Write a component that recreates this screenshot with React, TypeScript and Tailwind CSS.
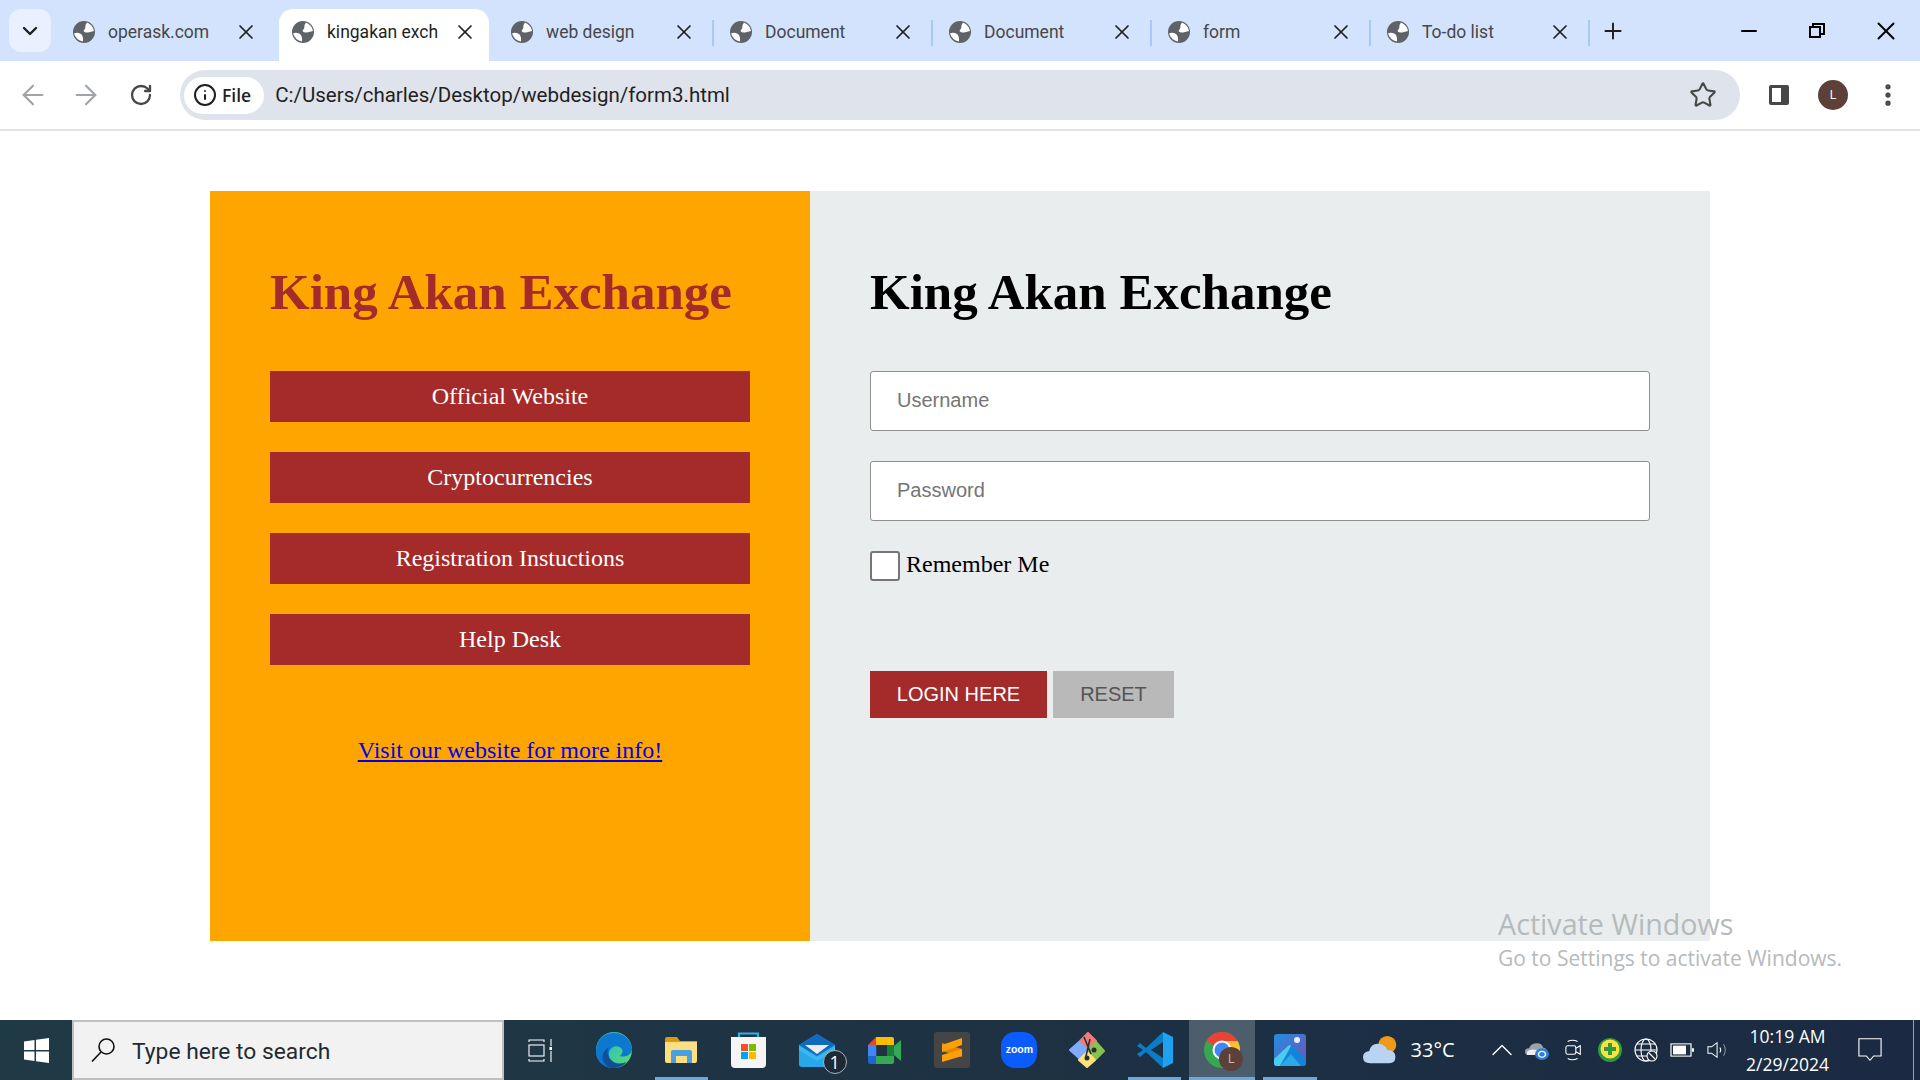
import { ArrowLeft, ArrowRight, ChevronDown, ChevronUp, EllipsisVertical, Info, Minus, Plus, RotateCw, Star, X } from "lucide-react";

const tabs = [
  { title: "operask.com" },
  { title: "kingakan exchange", active: true },
  { title: "web design" },
  { title: "Document", sep: true },
  { title: "Document", sep: true },
  { title: "form", sep: true },
  { title: "To-do list", sep: true },
];

const menuLinks = ["Official Website", "Cryptocurrencies", "Registration Instuctions", "Help Desk"];

function Favicon() {
  return (
    <svg width="22" height="22" viewBox="0 0 22 22" className="shrink-0">
      <circle cx="11" cy="11" r="11" fill="#5f6368" />
      <path d="M14 1.5 Q20 4 21 10 L15 11.5 Q12 12 10.5 10 Q13 7.5 12.5 4 Z" fill="#fff" />
      <path d="M1 12.5 Q4 11 8 13 Q10.5 15 10 20.5 Q3 19 1 12.5 Z" fill="#fff" />
    </svg>
  );
}

function Tab({ title, active, sep }: { title: string; active?: boolean; sep?: boolean }) {
  return (
    <div className="relative flex h-[52px] w-[219px] shrink-0 items-center">
      {sep && <div className="absolute -left-[6px] top-[11px] h-[26px] w-[2px] bg-[#a8c7fa]" />}
      {active && <div className="absolute -left-[1px] right-[10px] top-0 bottom-0 rounded-t-[14px] bg-white" />}
      <div className="relative flex w-full items-center pl-[12px] pr-[22px] pb-[7px]">
        <Favicon />
        <div className={`ml-[13px] w-[111px] overflow-hidden whitespace-nowrap pt-[2px] font-['Roboto',sans-serif] text-[17.5px] ${active ? "text-[#1f1f1f]" : "text-[#474747]"}`}>{active ? "kingakan exch" : title}</div>
        <X size={24} strokeWidth={1.7} className="ml-auto shrink-0 text-[#1f1f1f]" />
      </div>
    </div>
  );
}

function Edge() {
  return (
    <svg width="36" height="36" viewBox="0 0 36 36">
      <defs>
        <linearGradient id="edgeA" x1="0" y1="0" x2="1" y2="1">
          <stop offset="0" stopColor="#1fb5d8" />
          <stop offset="1" stopColor="#5cdc6b" />
        </linearGradient>
      </defs>
      <circle cx="18" cy="18" r="18" fill="url(#edgeA)" />
      <path d="M18 1 C6 1 0 10 0 20 C0 30 9 36 16 36 C22 36 27 34 30 30 C22 34 12 30 13 21 C14 14 22 12 26 17 C28 20 24 24 24 24 C30 26 36 22 36 17 C35 8 28 1 18 1 Z" fill="#0c78d0" />
      <path d="M16 36 C22 36 27 34 30 30 C24 33 18 32 14 27 C11 23 11 18 13 15 C8 18 5 24 7 29 C9 33 12 36 16 36 Z" fill="#114f9a" />
    </svg>
  );
}

function Explorer() {
  return (
    <svg width="32" height="26" viewBox="0 0 32 26">
      <path d="M0 2 Q0 0 2 0 H12 L15 4 H32 V8 H0 Z" fill="#d99a12" />
      <path d="M0 5 H32 V24 Q32 26 30 26 H2 Q0 26 0 24 Z" fill="#fbdf82" />
      <path d="M6 26 V15 Q6 13 8 13 H25 Q27 13 27 15 V26 Z" fill="#4a9fe0" />
      <rect x="11" y="19" width="11" height="7" fill="#fbdf82" />
    </svg>
  );
}

function Store() {
  return (
    <svg width="35" height="36" viewBox="0 0 35 36">
      <path d="M8 6 V1.5 H27 V6" fill="none" stroke="#2fb0ee" strokeWidth="2.2" />
      <path d="M0 5 H35 V32 Q35 36 31 36 H4 Q0 36 0 32 Z" fill="#f5f5f5" />
      <rect x="10" y="12" width="7" height="7" fill="#f25022" />
      <rect x="18" y="12" width="7" height="7" fill="#7fba00" />
      <rect x="10" y="20" width="7" height="7" fill="#00a4ef" />
      <rect x="18" y="20" width="7" height="7" fill="#ffb900" />
    </svg>
  );
}

function Mail() {
  return (
    <div className="relative h-[33px] w-[36px]">
      <svg width="36" height="33" viewBox="0 0 36 33">
        <path d="M0 11 L18 0 L36 11 V30 Q36 33 33 33 H3 Q0 33 0 30 Z" fill="#28a8ea" />
        <path d="M0 11 L18 0 L36 11 L18 22 Z" fill="#0f6cbd" />
        <path d="M6 11 H30 L18 20 Z" fill="#ececec" />
        <path d="M0 12 L18 23 L36 12 V16 L18 27 L0 16 Z" fill="#50c8f5" opacity="0.5" />
      </svg>
      <div className="absolute left-[24px] top-[16px] flex h-[24px] w-[24px] items-center justify-center rounded-full border border-[#aab2b6] bg-[#1d2a36] text-[18px] leading-none text-white">1</div>
    </div>
  );
}

function Meet() {
  return (
    <svg width="33" height="27" viewBox="0 0 33 27">
      <path d="M0 8 L8 0 V8 Z" fill="#ea4335" />
      <rect x="0" y="8" width="8.5" height="11" fill="#4285f4" />
      <path d="M0 19 H8.5 V27 H2 Q0 27 0 25 Z" fill="#1967d2" />
      <path d="M8 0 H24 Q26 0 26 2 V8 H8 Z" fill="#fbbc04" />
      <path d="M8 19 H26 V25 Q26 27 24 27 H8 Z" fill="#34a853" />
      <path d="M19 8 H26 V19 H19 Z" fill="#188038" />
      <path d="M26 9 L33 3 V24 L26 18 Z" fill="#34a853" />
      <path d="M8.5 8 H19 V19 H8.5 Z" fill="#1f3340" />
    </svg>
  );
}

function Sublime() {
  return (
    <svg width="36" height="36" viewBox="0 0 36 36">
      <rect width="36" height="36" rx="3" fill="#454545" />
      <path d="M8 19 L28 25 V17 L8 11 Z" fill="#e08600" />
      <path d="M8 13 L28 6 V13 L8 20 Z" fill="#ff9f0a" />
      <path d="M8 23 L28 17 V24 L8 30 Z" fill="#ff9f0a" />
    </svg>
  );
}

function Zoom() {
  return (
    <div className="flex h-[36px] w-[36px] items-center justify-center rounded-[14px] bg-[#0b5cff] font-['Liberation_Sans',sans-serif] text-[10.5px] font-bold text-white">zoom</div>
  );
}

function GitGui() {
  return (
    <svg width="36" height="36" viewBox="0 0 36 36" strokeLinejoin="round" strokeWidth="2">
      <path d="M19 1 L27 9 L19 17 L11 9 Z" fill="#f07c78" stroke="#f07c78" />
      <path d="M10 10 L18 18 L10 26 L1 18 Z" fill="#7fabff" stroke="#7fabff" />
      <path d="M27 10 L35 19 L27 27 L19 19 Z" fill="#86c34d" stroke="#86c34d" />
      <path d="M18 20 L26 28 L18 35 L10 28 Z" fill="#ffe27a" stroke="#ffe27a" />
      <path d="M15 5 L22 22 M21 7 L17 24" stroke="#26303a" strokeWidth="1.6" />
      <circle cx="18" cy="26" r="2.5" fill="#26303a" stroke="none" />
      <circle cx="25" cy="18" r="2.5" fill="#26303a" stroke="none" />
    </svg>
  );
}

function VSCode() {
  return (
    <svg width="36" height="36" viewBox="0 0 36 36">
      <path d="M26 0 L36 5 V31 L26 36 Z" fill="#1ea1f1" />
      <path d="M26 0 L9 16 L3 11 L0 14 L6 18 L0 22 L3 25 L9 20 L26 36 V26 L14 18 L26 10 Z" fill="#0a7cc8" />
    </svg>
  );
}

function Chrome() {
  return (
    <div className="relative h-[36px] w-[36px]">
      <svg width="36" height="36" viewBox="0 0 36 36">
        <circle cx="18" cy="18" r="18" fill="#34a853" />
        <path d="M2.4 9 A18 18 0 0 1 33.6 9 H18 A9 9 0 0 0 10 14 Z" fill="#ea4335" />
        <path d="M33.6 9 A18 18 0 0 1 18 36 L26 22 A9 9 0 0 0 18 9 Z" fill="#fbc02d" />
        <circle cx="18" cy="18" r="9.5" fill="#fff" />
        <circle cx="18" cy="18" r="7.5" fill="#4285f4" />
      </svg>
      <div className="absolute left-[15px] top-[15px] flex h-[24px] w-[24px] items-center justify-center rounded-full bg-[#5d4037] text-[13px] text-[#c9bdb9]">L</div>
    </div>
  );
}

function Photos() {
  return (
    <svg width="32" height="32" viewBox="0 0 32 32">
      <defs>
        <linearGradient id="photoA" x1="0" y1="0" x2="1" y2="1">
          <stop offset="0" stopColor="#1f8fe0" />
          <stop offset="1" stopColor="#7a4fb8" />
        </linearGradient>
      </defs>
      <rect width="32" height="32" rx="3" fill="url(#photoA)" />
      <circle cx="23" cy="6" r="3" fill="#e8f0fb" />
      <path d="M0 25 L14 12 Q16 10 18 12 L32 24 V29 Q32 32 29 32 H3 Q0 32 0 29 Z" fill="#1583d8" />
      <path d="M0 25 L14 12 Q16 10 17 12 L6 32 H3 Q0 32 0 29 Z" fill="#48cdf0" />
      <path d="M6 32 L17 20 L27 32 Z" fill="#2aa8e8" />
    </svg>
  );
}

const taskbarApps = [
  { key: "edge", icon: <Edge /> },
  { key: "explorer", icon: <Explorer />, bar: true },
  { key: "store", icon: <Store /> },
  { key: "mail", icon: <Mail /> },
  { key: "meet", icon: <Meet /> },
  { key: "sublime", icon: <Sublime /> },
  { key: "zoom", icon: <Zoom /> },
  { key: "git", icon: <GitGui /> },
  { key: "vscode", icon: <VSCode />, bar: true },
  { key: "chrome", icon: <Chrome />, bar: true, active: true },
  { key: "photos", icon: <Photos />, bar: true },
];

export default function App() {
  return (
    <div className="relative flex h-[1080px] w-[1920px] flex-col overflow-hidden bg-white font-['Open_Sans',sans-serif]">
      {/* Tab strip */}
      <div className="flex h-[61px] items-end bg-[#d3e3fd] pl-[9px]">
        <div className="mb-[9px] flex h-[43px] w-[42px] items-center justify-center rounded-[12px] bg-[#e9f0fe]">
          <ChevronDown size={24} strokeWidth={2.4} className="text-[#1f1f1f]" />
        </div>
        <div className="ml-[10px] flex">
          {tabs.map((t, i) => (
            <Tab key={i} title={t.title} active={t.active} sep={t.sep} />
          ))}
        </div>
        <div className="relative flex h-[52px] flex-1 items-center pb-[9px]">
          <div className="absolute -left-[6px] top-[11px] h-[26px] w-[2px] bg-[#a8c7fa]" />
          <Plus size={26} strokeWidth={1.8} className="ml-[6px] text-[#1f1f1f]" />
          <div className="ml-auto flex items-center text-black">
            <Minus size={24} strokeWidth={2} className="mr-[48px]" />
            <svg width="16" height="15" viewBox="0 0 16 15" className="mr-[46px]" fill="none" stroke="#000" strokeWidth="2">
              <rect x="1" y="4" width="10" height="10" />
              <path d="M4 4 V1 H15 V11 H11" />
            </svg>
            <X size={30} strokeWidth={1.6} className="mr-[19px]" />
          </div>
        </div>
      </div>

      {/* Toolbar */}
      <div className="flex h-[70px] items-center border-b-2 border-[#e2e2e2] bg-white">
        <ArrowLeft size={32} strokeWidth={1.6} className="ml-[17px] shrink-0 text-[#a0a3a7]" />
        <ArrowRight size={32} strokeWidth={1.6} className="ml-[21px] shrink-0 text-[#a0a3a7]" />
        <RotateCw size={24} strokeWidth={2.3} className="ml-[27px] shrink-0 text-[#474747]" />
        <div className="ml-[27px] flex h-[50px] w-[1560px] shrink-0 items-center rounded-full bg-[#dfe3eb] pl-[4px]">
          <div className="flex h-[37px] items-center rounded-full bg-white pl-[9px] pr-[13px] text-[17.5px] font-semibold text-[#1f1f1f]">
            <Info size={24} strokeWidth={2} className="mr-[5px]" />
            File
          </div>
          <span className="ml-[11px] font-['Roboto',sans-serif] text-[20.5px] text-[#1f1f1f]">C:/Users/charles/Desktop/webdesign/form3.html</span>
          <Star size={28} strokeWidth={1.8} className="ml-auto mr-[23px] text-[#474747]" />
        </div>
        <svg width="22" height="22" viewBox="0 0 22 22" className="ml-[28px] shrink-0">
          <rect x="1" y="1" width="20" height="20" rx="2" fill="#474747" />
          <rect x="4" y="4" width="9" height="14" fill="#fff" />
        </svg>
        <div className="ml-[28px] flex h-[30px] w-[30px] shrink-0 items-center justify-center rounded-full bg-[#5d4037] text-[13px] text-white">L</div>
        <EllipsisVertical size={28} strokeWidth={2.5} className="ml-[26px] shrink-0 text-[#474747]" />
      </div>

      {/* Page */}
      <div className="flex flex-1 justify-start pl-[210px] pt-[60px] font-['Liberation_Serif',serif]">
        <div className="flex h-[750px] w-[600px] flex-col bg-[#ffa500] px-[60px] pt-[80px]">
          <h1 className="text-[51px] font-bold leading-[42px] text-[#a52a2a]">King Akan Exchange</h1>
          <div className="mt-[58px] flex flex-col gap-[30px]">
            {menuLinks.map((m) => (
              <div key={m} className="flex h-[51px] items-center justify-center bg-[#a52a2a] pb-[2px] text-[24px] text-white">
                {m}
              </div>
            ))}
          </div>
          <a href="#" className="mt-[67px] text-center text-[24px] text-[#0000ee] underline">Visit our website for more info!</a>
        </div>
        <div className="flex h-[750px] w-[900px] flex-col bg-[#e9edee] px-[60px] pt-[80px]">
          <h1 className="text-[51px] font-bold leading-[42px] text-black">King Akan Exchange</h1>
          <input placeholder="Username" className="mt-[58px] h-[60px] w-[780px] rounded-[3px] border border-[#8f8f8f] bg-white pb-[2px] pl-[26px] font-['Liberation_Sans',sans-serif] text-[20px] placeholder:text-[#757575]" />
          <input placeholder="Password" className="mt-[30px] h-[60px] w-[780px] rounded-[3px] border border-[#8f8f8f] bg-white pb-[2px] pl-[26px] font-['Liberation_Sans',sans-serif] text-[20px] placeholder:text-[#757575]" />
          <label className="mt-[30px] flex items-start text-[24px] text-black">
            <span className="h-[30px] w-[30px] rounded-[3px] border-2 border-[#767676] bg-white" />
            <span className="ml-[6px] leading-[26px]">Remember Me</span>
          </label>
          <div className="mt-[90px] flex gap-[6px] font-['Liberation_Sans',sans-serif] text-[20px]">
            <button className="h-[47px] w-[177px] bg-[#a52a2a] pb-[2px] text-white">LOGIN HERE</button>
            <button className="h-[47px] w-[121px] bg-[#b9b9b9] pb-[2px] text-[#555]">RESET</button>
          </div>
        </div>
      </div>

      {/* Activation watermark */}
      <div className="absolute left-[1498px] top-[906px] font-['Open_Sans',sans-serif] text-[#b6babb]">
        <div className="text-[28.7px] leading-[36px]">Activate Windows</div>
        <div className="text-[21px] leading-[33px]">Go to Settings to activate Windows.</div>
      </div>

      {/* Taskbar */}
      <div className="flex h-[60px] items-center bg-gradient-to-r from-[#203a45] to-[#1b2a42] text-white">
        <div className="flex w-[72px] justify-center">
          <svg width="25" height="25" viewBox="0 0 25 25" fill="#fff">
            <path d="M0 3.5 L10.5 2 V12 H0 Z M12 1.8 L25 0 V12 H12 Z M0 13.5 H10.5 V23 L0 21.5 Z M12 13.5 H25 V25 L12 23.2 Z" />
          </svg>
        </div>
        <div className="flex h-[60px] w-[432px] items-center border-2 border-[#c0c0c0] bg-[#f2f2f2] pl-[17px] text-[#1f2a33]">
          <svg width="24" height="24" viewBox="0 0 24 24" fill="none" stroke="#111" strokeWidth="1.6">
            <circle cx="15.5" cy="8.5" r="7.5" />
            <path d="M10 14 L1 23.5" />
          </svg>
          <span className="ml-[17px] pt-[4px] font-['Roboto',sans-serif] text-[22.8px]">Type here to search</span>
        </div>
        <div className="flex w-[71px] justify-center">
          <svg width="24" height="23" viewBox="0 0 24 23" fill="none" stroke="#fff" strokeWidth="1.1">
            <path d="M1 3 V1 H16 V3 M1 20 V22 H16 V20" />
            <rect x="1" y="6" width="15" height="11" />
            <path d="M23 0 V7 M23 12 V23" />
            <rect x="22" y="8.5" width="2" height="2" fill="#fff" />
          </svg>
        </div>
        <div className="ml-[5px] flex">
          {taskbarApps.map((a) => (
            <div key={a.key} className="relative flex h-[60px] w-[67.6px] items-center justify-center">
              {a.active && <div className="absolute inset-x-[1px] inset-y-0 bg-[#4c5d6b]" />}
              <div className="relative flex items-center">{a.icon}</div>
              {a.bar && <div className={`absolute bottom-0 h-[3px] bg-[#6aa9dc] ${a.active ? "inset-x-[1px]" : "inset-x-[7px]"}`} />}
            </div>
          ))}
        </div>
        <div className="ml-[39px] flex items-center">
          <svg width="36" height="30" viewBox="0 0 40 34" preserveAspectRatio="none">
            <circle cx="27" cy="11" r="10" fill="#f09a1a" />
            <path d="M8 32 Q0 32 0 25 Q0 19 7 18 Q9 9 18 10 Q25 11 27 17 Q36 17 36 25 Q36 32 29 32 Z" fill="#b9d3f0" />
          </svg>
          <span className="ml-[12px] w-[44px] whitespace-nowrap text-[20px]">33°C</span>
        </div>
        <ChevronUp size={36} strokeWidth={0.9} className="ml-[29px] shrink-0" />
        <svg width="24" height="20" viewBox="0 0 24 24" className="ml-[5px] shrink-0" preserveAspectRatio="none">
          <path d="M4 18 Q0 18 0 14 Q0 10 4 10 Q6 4 12 4 Q17 4 18 9 Q22 10 22 14 Q22 18 18 18 Z" fill="#9aa3ab" />
          <path d="M2 18 H12 V12 Q5 10 2 14 Z" fill="#eee" />
          <circle cx="17" cy="17" r="7" fill="#2b7fd6" />
          <circle cx="17" cy="17" r="3.5" fill="none" stroke="#fff" strokeWidth="1.5" />
        </svg>
        <svg width="18" height="22" viewBox="0 0 20 26" className="ml-[16px] shrink-0" fill="none" stroke="#fff" strokeWidth="1.2" preserveAspectRatio="none">
          <path d="M3 3 Q8 0 14 3 M3 23 Q8 26 14 23" />
          <rect x="1" y="8" width="11" height="10" rx="2" />
          <path d="M12 11 L17 8 V18 L12 15" />
        </svg>
        <svg width="24" height="24" viewBox="0 0 24 24" className="ml-[15px] shrink-0">
          <circle cx="12" cy="12" r="12" fill="#2e9b3e" />
          <circle cx="12" cy="11" r="9.5" fill="#ffe13d" />
          <path d="M10 5 H14 V9 H18 V13 H14 V17 H10 V13 H6 V9 H10 Z" fill="#2e9b3e" />
        </svg>
        <svg width="24" height="24" viewBox="0 0 24 24" className="ml-[12px] shrink-0" fill="none" stroke="#fff" strokeWidth="1.1">
          <circle cx="12" cy="12" r="11" />
          <ellipse cx="12" cy="12" rx="5" ry="11" />
          <path d="M1 12 H23 M3 6 H21 M3 18 H21" />
          <circle cx="18" cy="18" r="5" fill="#1c2b42" />
          <path d="M15 15 L21 21" />
        </svg>
        <svg width="24" height="14" viewBox="0 0 24 16" className="ml-[12px] shrink-0" fill="none" preserveAspectRatio="none">
          <rect x="1" y="1" width="20" height="14" stroke="#fff" strokeWidth="1.2" />
          <rect x="3" y="3" width="13" height="10" fill="#fff" />
          <rect x="22" y="6" width="2" height="4" fill="#fff" />
        </svg>
        <svg width="22" height="18" viewBox="0 0 24 22" className="ml-[13px] shrink-0" fill="none" stroke="#fff" strokeWidth="1.1" preserveAspectRatio="none">
          <path d="M1 7 H5 L11 2 V20 L5 15 H1 Z" />
          <path d="M14 8 Q16 11 14 14" />
          <path d="M18 4 Q22 11 18 18" opacity="0.5" />
        </svg>
        <div className="ml-[14px] flex w-[90px] shrink-0 flex-col items-center text-[17.5px] leading-[28px]">
          <span className="whitespace-nowrap">10:19 AM</span>
          <span className="whitespace-nowrap">2/29/2024</span>
        </div>
        <svg width="24" height="24" viewBox="0 0 26 28" className="ml-[25px] shrink-0" fill="none" stroke="#fff" strokeWidth="1.2" preserveAspectRatio="none">
          <path d="M1 1 H25 V21 H17 L13 26 L9 21 H1 Z" />
        </svg>
        <div className="ml-auto mr-[6px] h-[60px] w-px bg-[#9aa3ab]" />
      </div>
    </div>
  );
}
